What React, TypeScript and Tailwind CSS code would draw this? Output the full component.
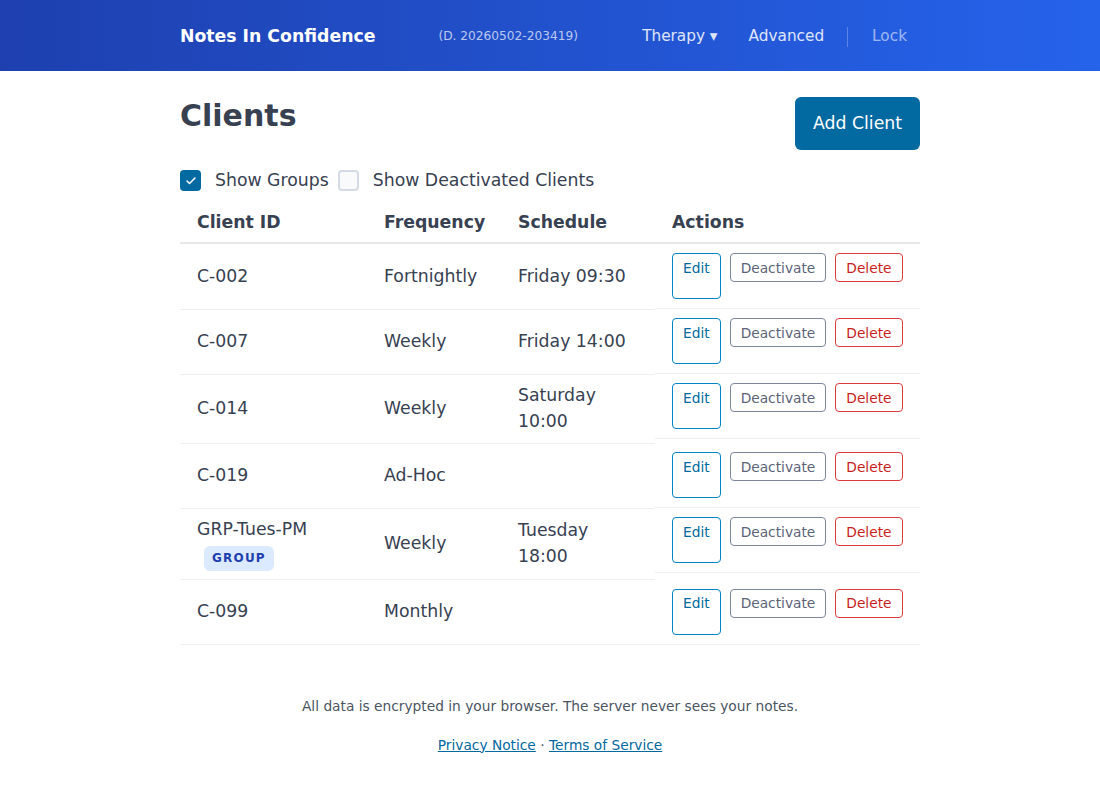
import React, { useState } from "react";
import { Check } from "lucide-react";

type Client = {
  id: string;
  frequency: string;
  schedule?: string[];
  isGroup?: boolean;
};

const clients: Client[] = [
  { id: "C-002", frequency: "Fortnightly", schedule: ["Friday 09:30"] },
  { id: "C-007", frequency: "Weekly", schedule: ["Friday 14:00"] },
  { id: "C-014", frequency: "Weekly", schedule: ["Saturday", "10:00"] },
  { id: "C-019", frequency: "Ad-Hoc" },
  {
    id: "GRP-Tues-PM",
    frequency: "Weekly",
    schedule: ["Tuesday", "18:00"],
    isGroup: true,
  },
  { id: "C-099", frequency: "Monthly" },
];

function Checkbox({
  checked,
  onChange,
  label,
}: {
  checked: boolean;
  onChange: () => void;
  label: string;
}) {
  return (
    <label className="flex cursor-pointer items-center" onClick={onChange}>
      {checked ? (
        <span className="flex h-[21px] w-[21px] items-center justify-center rounded-[4px] bg-[#0369a1] text-white">
          <Check className="h-[12px] w-[12px] stroke-[3]" />
        </span>
      ) : (
        <span className="h-[21px] w-[21px] rounded-[4px] border-2 border-[#d5dbe6] bg-[#f8fafc]" />
      )}
      <span className="ml-[14px]">{label}</span>
    </label>
  );
}

export default function App() {
  const [showGroups, setShowGroups] = useState(true);
  const [showDeactivated, setShowDeactivated] = useState(false);

  return (
    <div className="min-h-screen bg-white font-['DejaVu_Sans',sans-serif] text-[17.3px] leading-[25.5px] text-[#374151]">
      {/* Top bar */}
      <header className="h-[71px] bg-linear-to-r from-[#1e40af] to-[#2563eb] pt-[2px] text-white">
        <div className="mx-auto flex h-full max-w-[740px] items-center">
          <span className="text-[17.3px] font-bold">Notes In Confidence</span>
          <span className="ml-[63px] text-[12.2px] text-white/70">
            (D. 20260502-203419)
          </span>
          <nav className="ml-auto flex items-center text-[15.3px] text-white/85">
            <span>Therapy ▾</span>
            <span className="ml-[31px]">Advanced</span>
            <span className="ml-[23px] h-[20px] w-px bg-white/25" />
            <span className="ml-[24px] mr-[13px] text-white/55">Lock</span>
          </nav>
        </div>
      </header>

      <main className="mx-auto max-w-[740px]">
        {/* Title row */}
        <div className="mt-[26px] flex items-start justify-between">
          <h1 className="text-[30px] font-bold leading-[38px]">Clients</h1>
          <button className="h-[53px] rounded-md bg-[#0369a1] px-[18px] pt-[1px] text-white">
            Add Client
          </button>
        </div>

        {/* Filters */}
        <div className="mt-[18px] flex items-center gap-[9px]">
          <Checkbox
            checked={showGroups}
            onChange={() => setShowGroups(!showGroups)}
            label="Show Groups"
          />
          <Checkbox
            checked={showDeactivated}
            onChange={() => setShowDeactivated(!showDeactivated)}
            label="Show Deactivated Clients"
          />
        </div>

        {/* Table */}
        <table className="mt-[5px] w-full table-fixed border-collapse text-left">
          <thead>
            <tr className="border-b-2 border-[#e5e7eb]">
              <th className="w-[187px] px-[17px] pt-[11px] pb-[7px] font-bold">
                Client ID
              </th>
              <th className="w-[134px] px-[17px] pt-[11px] pb-[7px] font-bold">
                Frequency
              </th>
              <th className="w-[154px] px-[17px] pt-[11px] pb-[7px] font-bold">
                Schedule
              </th>
              <th className="px-[17px] pt-[11px] pb-[7px] font-bold">Actions</th>
            </tr>
          </thead>
          <tbody>
            {clients.map((c) => (
              <tr key={c.id}>
                <td className="border-b border-[#eceef2] px-[17px] py-[8.5px]">
                  <div>{c.id}</div>
                  {c.isGroup && (
                    <div className="mt-[3px] flex">
                      <span className="ml-[7px] flex h-[25px] items-center rounded-md bg-[#dbeafe] px-2 text-xs font-bold tracking-widest text-[#1e40af]">
                        GROUP
                      </span>
                    </div>
                  )}
                </td>
                <td className="border-b border-[#eceef2] px-[17px] py-[8.5px]">
                  {c.frequency}
                </td>
                <td className="border-b border-[#eceef2] px-[17px] py-[8.5px]">
                  {c.schedule?.map((line) => (
                    <div key={line}>{line}</div>
                  ))}
                </td>
                <td className="p-0 align-top">
                  <div className="flex items-start gap-[9px] border-b border-[#eceef2] px-[17px] py-[9px] text-[13.75px] leading-5">
                    <a
                      href="#"
                      className="flex h-[46px] items-start rounded-[4px] border border-[#0284c7] px-[10px] py-[3.5px] text-[#0369a1]"
                    >
                      Edit
                    </a>
                    <button className="rounded-[4px] border border-[#7c879b] px-[10px] py-[3.5px] text-[#5b6477]">
                      Deactivate
                    </button>
                    <button className="rounded-[4px] border border-[#dc3b3b] px-[10px] py-[3.5px] text-[#c81e1e]">
                      Delete
                    </button>
                  </div>
                </td>
              </tr>
            ))}
          </tbody>
        </table>
      </main>

      {/* Footer */}
      <footer className="mt-[49px] text-center text-[13.75px] text-[#4b5563]">
        <p>All data is encrypted in your browser. The server never sees your notes.</p>
        <p className="mt-[13px]">
          <a href="#" className="text-[#0369a1] underline">
            Privacy Notice
          </a>{" "}
          ·{" "}
          <a href="#" className="text-[#0369a1] underline">
            Terms of Service
          </a>
        </p>
      </footer>
    </div>
  );
}
